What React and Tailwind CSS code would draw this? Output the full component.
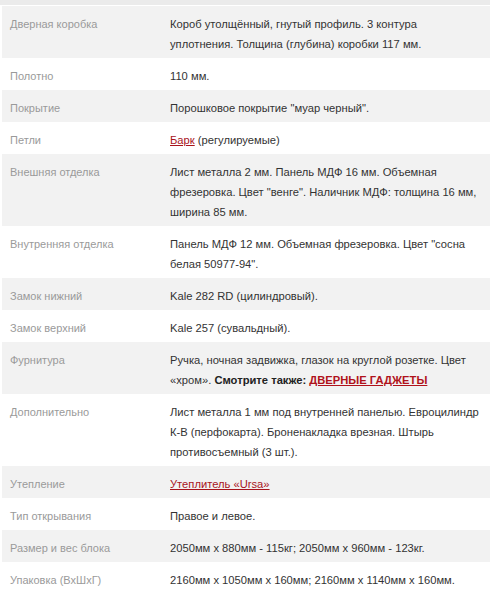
import React from 'react';

const Link = ({ children, bold }) => (
  <a href="#" className={bold ? 'text-[#b0121b] underline font-bold' : 'text-[#a8141c] underline'}>
    {children}
  </a>
);

const rows = [
  ['Дверная коробка', 'Короб утолщённый, гнутый профиль. 3 контура уплотнения. Толщина (глубина) коробки 117 мм.'],
  ['Полотно', '110 мм.'],
  ['Покрытие', 'Порошковое покрытие "муар черный".'],
  ['Петли', <><Link>Барк</Link> (регулируемые)</>],
  ['Внешняя отделка', 'Лист металла 2 мм. Панель МДФ 16 мм. Объемная фрезеровка. Цвет "венге". Наличник МДФ: толщина 16 мм, ширина 85 мм.'],
  ['Внутренняя отделка', 'Панель МДФ 12 мм. Объемная фрезеровка. Цвет "сосна белая 50977-94".'],
  ['Замок нижний', 'Kale 282 RD (цилиндровый).'],
  ['Замок верхний', 'Kale 257 (сувальдный).'],
  [
    'Фурнитура',
    <>
      Ручка, ночная задвижка, глазок на круглой розетке. Цвет «хром». <b className="font-bold text-[#222]">Смотрите также:</b>{' '}
      <Link bold>ДВЕРНЫЕ ГАДЖЕТЫ</Link>
    </>,
  ],
  ['Дополнительно', 'Лист металла 1 мм под внутренней панелью. Евроцилиндр К-В (перфокарта). Броненакладка врезная. Штырь противосъемный (3 шт.).'],
  ['Утепление', <Link>Утеплитель «Ursa»</Link>],
  ['Тип открывания', 'Правое и левое.'],
  ['Размер и вес блока', '2050мм х 880мм - 115кг; 2050мм х 960мм - 123кг.'],
  ['Упаковка (ВхШхГ)', '2160мм х 1050мм х 160мм; 2160мм х 1140мм х 160мм.'],
];

export default function App() {
  return (
    <div className="w-[490px] h-[595px] bg-white overflow-hidden font-['Liberation_Sans',Arial,sans-serif] leading-[20px]">
      <div className="h-[5px] bg-[#ebebeb] border-b border-white box-content" />
      <div className="ml-[2px]">
        {rows.map(([label, value], i) => (
          <div
            key={i}
            className={`flex pt-[8px] pb-[4px] ${i % 2 === 0 ? 'bg-[#f2f2f2]' : 'bg-white'}`}
          >
            <div className="w-[168px] shrink-0 pl-[8px] pr-2 text-[11px] text-[#9a9a9a]">{label}</div>
            <div className="flex-1 pr-[9px] text-[11.2px] text-[#333]">{value}</div>
          </div>
        ))}
      </div>
    </div>
  );
}
